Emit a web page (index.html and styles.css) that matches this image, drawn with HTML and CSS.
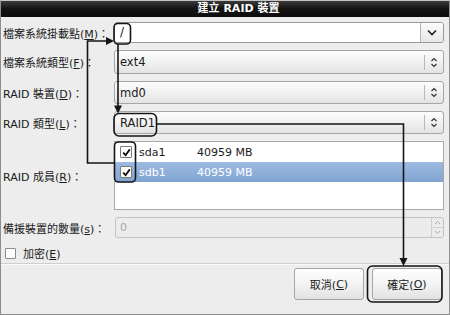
FILE: index.html
```html
<!DOCTYPE html>
<html lang="zh-Hant">
<head>
<meta charset="utf-8">
<title>建立 RAID 裝置</title>
<link rel="stylesheet" href="styles.css">
</head>
<body>
<div class="window">
  <div class="titlebar">建立 RAID 裝置</div>
  <div class="form">
    <div class="label">檔案系統掛載點(<u>M</u>)：</div>
    <div class="entry-combo">
      <div class="entry-text">/</div>
      <div class="entry-btn">
        <svg width="10" height="7" viewBox="0 0 10 7"><path d="M1 1.5 L5 5.5 L9 1.5" fill="none" stroke="#222" stroke-width="1.6"/></svg>
      </div>
    </div>

    <div class="label">檔案系統類型(<u>F</u>)：</div>
    <div class="combo">
      <div class="combo-text">ext4</div>
      <div class="combo-arrows">
        <svg width="8" height="11" viewBox="0 0 8 11"><path d="M1.5 4 L4 1.5 L6.5 4 M1.5 7 L4 9.5 L6.5 7" fill="none" stroke="#333" stroke-width="1.2"/></svg>
      </div>
    </div>

    <div class="label">RAID 裝置(<u>D</u>)：</div>
    <div class="combo">
      <div class="combo-text">md0</div>
      <div class="combo-arrows">
        <svg width="8" height="11" viewBox="0 0 8 11"><path d="M1.5 4 L4 1.5 L6.5 4 M1.5 7 L4 9.5 L6.5 7" fill="none" stroke="#333" stroke-width="1.2"/></svg>
      </div>
    </div>

    <div class="label">RAID 類型(<u>L</u>)：</div>
    <div class="combo">
      <div class="combo-text">RAID1</div>
      <div class="combo-arrows">
        <svg width="8" height="11" viewBox="0 0 8 11"><path d="M1.5 4 L4 1.5 L6.5 4 M1.5 7 L4 9.5 L6.5 7" fill="none" stroke="#333" stroke-width="1.2"/></svg>
      </div>
    </div>

    <div class="label">RAID 成員(<u>R</u>)：</div>
    <div class="list">
      <div class="list-row">
        <span class="cb checked"><svg width="9" height="9" viewBox="0 0 9 9"><path d="M1.2 4.6 L3.6 7.2 L7.8 1.4" fill="none" stroke="#111" stroke-width="1.8"/></svg></span>
        <span class="dev">sda1</span>
        <span class="size">40959 MB</span>
      </div>
      <div class="list-row selected">
        <span class="cb checked"><svg width="9" height="9" viewBox="0 0 9 9"><path d="M1.2 4.6 L3.6 7.2 L7.8 1.4" fill="none" stroke="#111" stroke-width="1.8"/></svg></span>
        <span class="dev">sdb1</span>
        <span class="size">40959 MB</span>
      </div>
    </div>

    <div class="label">備援裝置的數量(<u>s</u>)：</div>
    <div class="spin">
      <div class="spin-text">0</div>
      <div class="spin-btns">
        <div class="spin-btn"><svg width="7" height="5" viewBox="0 0 7 5"><path d="M1 4 L3.5 1.5 L6 4" fill="none" stroke="#aaa" stroke-width="1"/></svg></div>
        <div class="spin-btn"><svg width="7" height="5" viewBox="0 0 7 5"><path d="M1 1 L3.5 3.5 L6 1" fill="none" stroke="#aaa" stroke-width="1"/></svg></div>
      </div>
    </div>
  </div>

  <div class="encrypt">
    <span class="cb"></span>
    <span>加密(<u>E</u>)</span>
  </div>

  <div class="separator"></div>

  <div class="buttons">
    <div class="btn">取消(<u>C</u>)</div>
    <div class="btn">確定(<u>O</u>)</div>
  </div>

  <svg class="annot" width="450" height="315" viewBox="0 0 450 315">
    <g fill="none" stroke="#151515" stroke-width="1.6">
      <rect x="114" y="22.5" width="16.5" height="20.5" rx="4"/>
      <rect x="114" y="112.5" width="42.5" height="22.5" rx="5"/>
      <rect x="114.5" y="141" width="21" height="40" rx="4"/>
      <rect x="367.5" y="265" width="74.5" height="36" rx="5"/>
      <polyline points="114.5,162 87.5,162 87.5,40 108,40"/>
      <line x1="118" y1="43" x2="118" y2="106"/>
      <polyline points="156.5,123 403.5,123 403.5,258"/>
    </g>
    <g fill="#151515">
      <polygon points="114,40 106,36 106,44"/>
      <polygon points="118,112.5 114,104.5 122,104.5"/>
      <polygon points="403.5,265 399.5,257 407.5,257"/>
    </g>
  </svg>
</div>
</body>
</html>
```

FILE: styles.css
```css
* { box-sizing: border-box; }

html, body {
  margin: 0;
  padding: 0;
  background: #ededed;
}

body {
  font-family: "DejaVu Sans", "Noto Sans CJK TC", sans-serif;
  font-size: 11px;
  color: #1a1a1a;
}

u { text-decoration: underline; text-underline-offset: 1px; }

.window {
  position: relative;
  width: 450px;
  height: 315px;
  background: #ededed;
  border: 1px solid #8e8e8e;
  border-top-color: #c4c4c4;
  display: flex;
  flex-direction: column;
}

.titlebar {
  height: 16px;
  background: linear-gradient(#3b3b3b, #141414 45%, #0c0c0c);
  color: #fff;
  font-weight: bold;
  font-size: 11px;
  line-height: 16px;
  text-align: center;
  padding-left: 27px;
}

.form {
  display: grid;
  grid-template-columns: 111px 1fr;
  grid-template-rows: 21px 24px 23px 23px 69px 21px;
  row-gap: 7px;
  padding: 5px 5px 0 2px;
}

.form > .row-gap { display: none; }

.label {
  align-self: center;
  white-space: nowrap;
  padding-left: 0;
}

.entry-combo {
  display: flex;
  border: 1px solid #9a9a9a;
  border-radius: 3px;
  background: #fff;
  overflow: hidden;
}

.entry-text {
  flex: 1;
  padding-left: 5px;
  line-height: 19px;
  font-size: 12px;
}

.entry-btn {
  width: 23px;
  border-left: 1px solid #b4b4b4;
  background: linear-gradient(#fcfcfc, #e6e6e6);
  display: flex;
  align-items: center;
  justify-content: center;
}

.combo {
  display: flex;
  align-items: center;
  border: 1px solid #a6a6a6;
  border-radius: 3px;
  background: linear-gradient(#fdfdfd, #f1f1f1 50%, #e3e3e3);
}

.combo-text {
  flex: 1;
  padding-left: 5px;
  font-size: 11.5px;
}

.combo-arrows {
  width: 19px;
  height: 15px;
  border-left: 1px solid #b8b8b8;
  display: flex;
  align-items: center;
  justify-content: center;
}

.list {
  border: 1px solid #a9a9a9;
  background: #fff;
}

.list-row {
  height: 20px;
  display: flex;
  align-items: center;
  padding-left: 5px;
}

.list-row.selected {
  background: linear-gradient(#9dbbe1, #7fa4d2);
  color: #fff;
}

.cb {
  width: 12px;
  height: 12px;
  border: 1px solid #7a7a7a;
  border-radius: 1px;
  background: #fff;
  display: inline-flex;
  align-items: center;
  justify-content: center;
}

.dev { margin-left: 7px; width: 58px; }
.size { }

.spin {
  display: flex;
  border: 1px solid #c3c3c3;
  border-radius: 3px;
  background: #ececec;
  margin-left: 1px;
}

.spin-text {
  flex: 1;
  padding-left: 4px;
  line-height: 19px;
  color: #a8a8a8;
}

.spin-btns {
  width: 12px;
  display: flex;
  flex-direction: column;
  border-left: 1px solid #cfcfcf;
}

.spin-btn {
  flex: 1;
  display: flex;
  align-items: center;
  justify-content: center;
}
.spin-btn + .spin-btn { border-top: 1px solid #d4d4d4; }

.encrypt {
  display: flex;
  align-items: center;
  gap: 7px;
  margin-top: 8px;
  padding-left: 4px;
  height: 14px;
}

.encrypt .cb { width: 11px; height: 11px; border-color: #8a8a8a; }

.separator {
  margin-top: 3px;
  height: 2px;
  border-top: 1px solid #cfcfcf;
  border-bottom: 1px solid #fafafa;
}

.buttons {
  display: flex;
  justify-content: flex-end;
  gap: 8px;
  margin-top: 3px;
  padding-right: 7px;
}

.btn {
  width: 70px;
  height: 32px;
  border: 1px solid #a6a6a6;
  border-radius: 3px;
  background: linear-gradient(#fefefe, #f3f3f3 50%, #e2e2e2);
  display: flex;
  align-items: center;
  justify-content: center;
}

.annot {
  position: absolute;
  left: -1px;
  top: 0;
  pointer-events: none;
}
```
